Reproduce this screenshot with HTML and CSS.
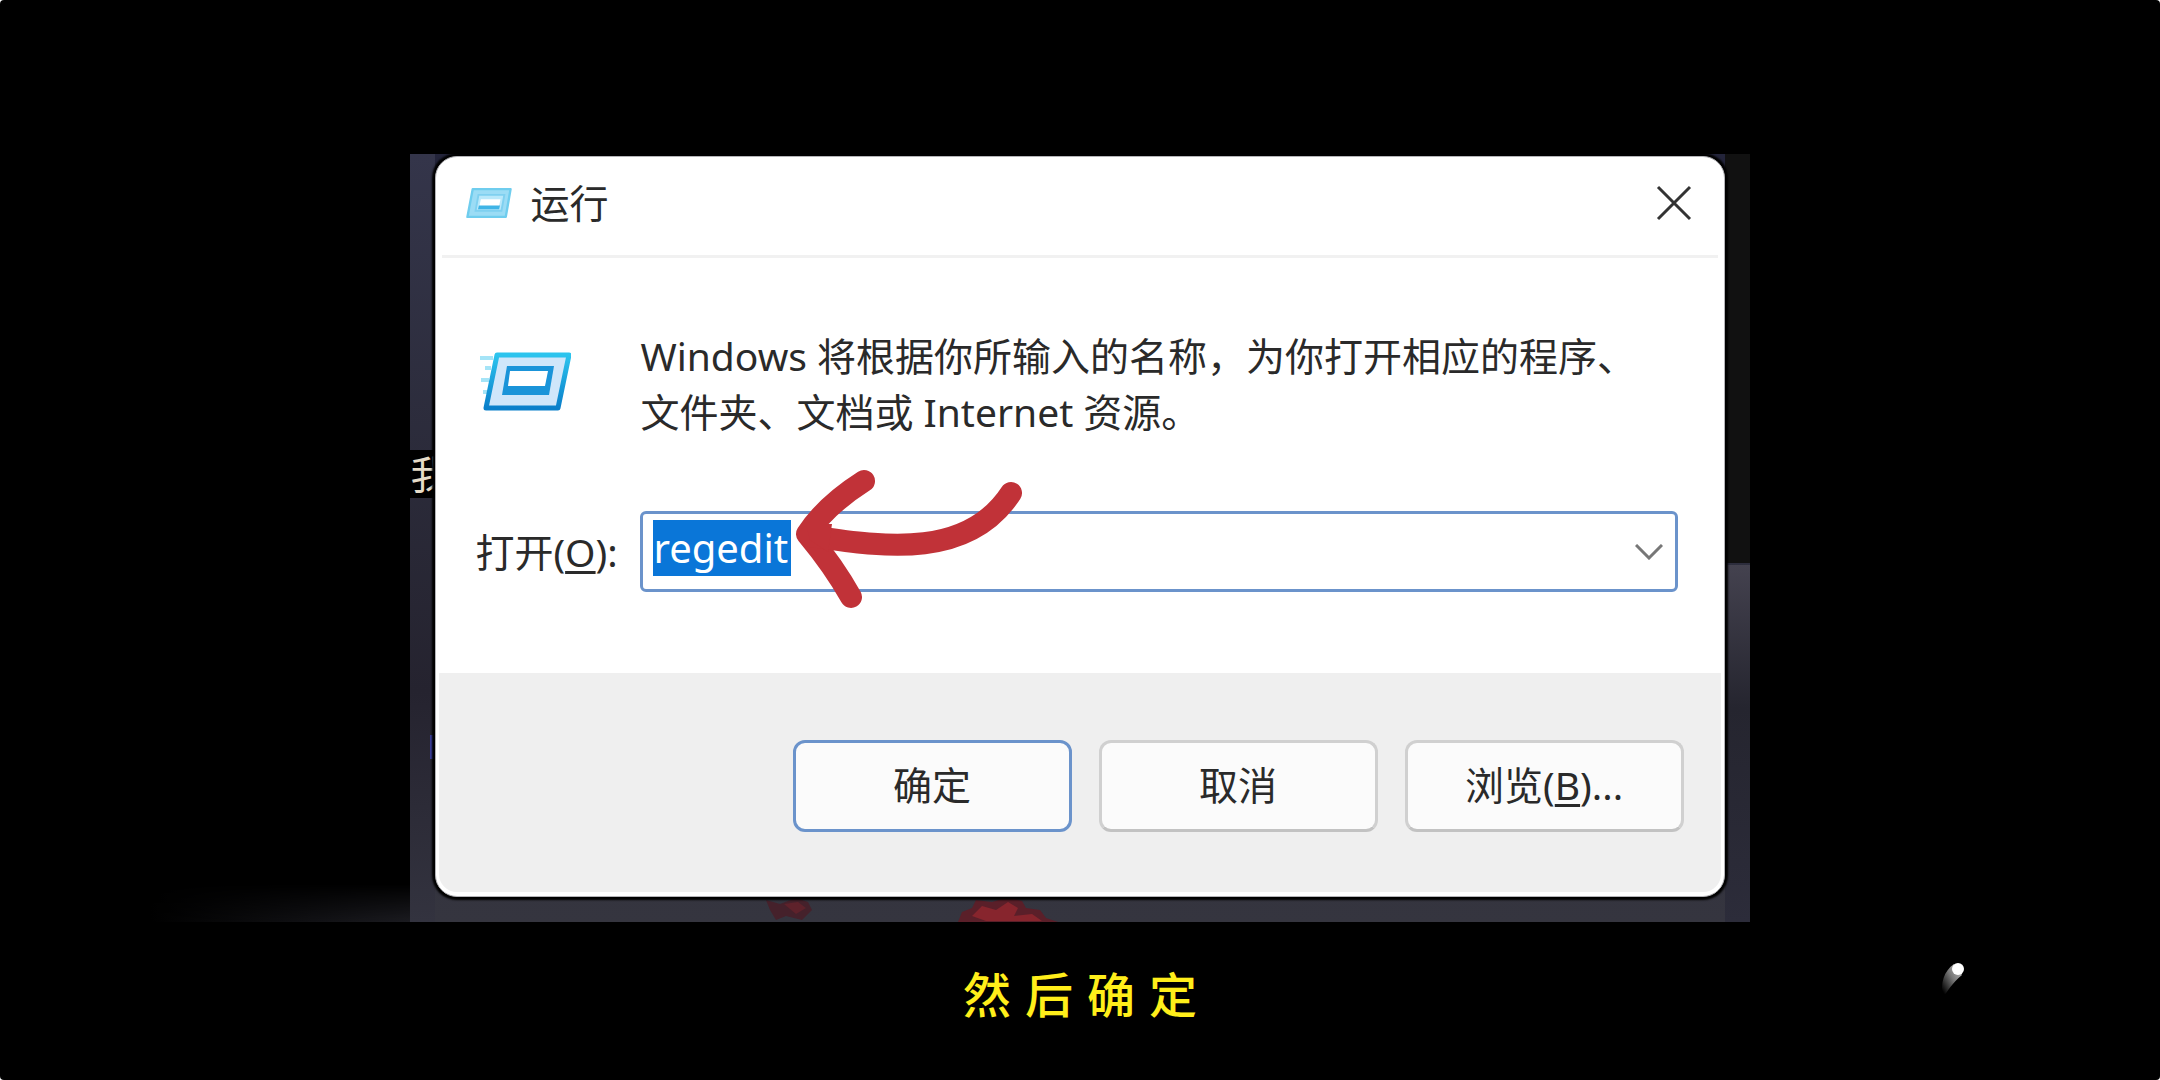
FILE: index.html
```html
<!DOCTYPE html>
<html lang="zh-CN">
<head>
<meta charset="utf-8">
<title>运行</title>
<link rel="stylesheet" href="styles.css">
</head>
<body>
<main class="stage">
  <div class="desktop">
    <span class="leaf-top"></span>
    <svg class="leaves" viewBox="0 0 330 26" aria-hidden="true">
      <path d="M20 4L34 8L50 2L62 6L66 14L56 24L40 20L30 24L24 14Z" fill="#45212b"/>
      <path d="M38 8L52 6L60 12L50 18Z" fill="#5e222b"/>
      <path d="M212 26L216 16L226 12L230 4L246 6L262 1L276 5L280 12L294 14L300 22L312 26Z" fill="#5a1f29"/>
      <path d="M226 20L236 10L250 14L262 6L272 12L268 20L286 18L296 25L240 25Z" fill="#87252d"/>
    </svg>
    <span class="desktop-label" aria-hidden="true">我</span>
    <span class="desktop-mark"></span>
    <section class="dialog" role="dialog" aria-labelledby="dialog-title">
      <header class="titlebar">
        <svg class="icon-small" viewBox="0 0 96 64" aria-hidden="true">
          <path d="M14 3H93L83 61H3Z" fill="#9bdcf5" stroke="#6fcdee" stroke-width="5" stroke-linejoin="round"/>
          <path d="M26 15H80L74 48H20Z" fill="#b9e8fa" stroke="#7fd0f0" stroke-width="4"/>
          <path d="M31 24H72L69 38H28Z" fill="#fff"/>
          <path d="M27 37H71L69 45H25Z" fill="#3fb4e6"/>
        </svg>
        <h1 class="title" id="dialog-title">运行</h1>
        <button class="close" type="button" aria-label="关闭">
          <svg viewBox="0 0 36 36" aria-hidden="true"><path d="M2 2L34 34M34 2L2 34" fill="none" stroke="#333" stroke-width="3"/></svg>
        </button>
      </header>
      <div class="content">
        <svg class="icon-run" viewBox="0 0 96 64" aria-hidden="true">
          <defs>
            <linearGradient id="frame" x1="0" y1="0" x2="0" y2="1">
              <stop offset="0" stop-color="#2cc4ee"/>
              <stop offset="1" stop-color="#0a7fca"/>
            </linearGradient>
          </defs>
          <path d="M5 6H18M10 16H16M6 28H14M8 40H12" stroke="#a5e4f7" stroke-width="4"/>
          <path d="M22 3H94L83 56H11Z" fill="#cfe6fa" stroke="url(#frame)" stroke-width="5" stroke-linejoin="round"/>
          <path d="M32 14H79L74 43H27Z" fill="#1a94d9"/>
          <path d="M35 19H73L70 34H33Z" fill="#fff"/>
        </svg>
        <p class="description">Windows 将根据你所输入的名称，为你打开相应的程序、<br>文件夹、文档或 Internet 资源。</p>
        <label class="label" for="command">打开(<u>O</u>):</label>
        <div class="combo">
          <input class="command" id="command" type="text" value="regedit" spellcheck="false">
          <button class="expand" type="button" aria-label="展开列表">
            <svg viewBox="0 0 28 16" aria-hidden="true"><path d="M1 1L14 14L27 1" fill="none" stroke="#777" stroke-width="3"/></svg>
          </button>
          <svg class="pointer" viewBox="0 0 260 180" aria-hidden="true">
            <g fill="none" stroke="#c13238" stroke-width="22" stroke-linecap="round" stroke-linejoin="round">
              <path d="M84 41C62 55 40 74 27 94C42 112 57 132 71 157"/>
              <path d="M30 96C90 104 185 124 231 53"/>
            </g>
            <path d="M26 84L52 84L48 112L30 100Z" fill="#c13238"/>
          </svg>
        </div>
      </div>
      <footer class="actions">
        <button class="button button-default" type="button">确定</button>
        <button class="button" type="button">取消</button>
        <button class="button" type="button">浏览(<u>B</u>)...</button>
      </footer>
    </section>
  </div>
  <p class="caption">然后确定</p>
  <svg class="spark" viewBox="0 0 30 50" aria-hidden="true">
    <defs>
      <linearGradient id="trail" x1="1" y1="0" x2="0" y2="1">
        <stop offset="0" stop-color="#ccc"/>
        <stop offset="0.45" stop-color="#777"/>
        <stop offset="0.9" stop-color="#000"/>
      </linearGradient>
    </defs>
    <path d="M14 5C4 12 0 24 3 38C8 32 12 24 22 16Z" fill="url(#trail)"/>
    <circle cx="18" cy="10" r="6" fill="#fff"/>
  </svg>
</main>
</body>
</html>
```
FILE: styles.css
```css
* {
  box-sizing: border-box;
}

html {
  background: #fff;
}

body {
  margin: 0;
  font-family: "Noto Sans", "Noto Sans CJK SC", sans-serif;
  font-size: 39px;
  line-height: 56px;
  color: #2a2a2a;
}

button,
input {
  font: inherit;
  color: inherit;
}

.stage {
  position: relative;
  display: flex;
  flex-direction: column;
  align-items: center;
  min-height: 100vh;
  padding-top: 154px;
  background: #000;
  border-radius: 4px;
}

/* Strip of desktop that shows round the dialog */
.desktop {
  position: relative;
  width: 62%;
  padding: 2px 25px 25px;
  background:
    linear-gradient(#111, #111) right top / 25px 409px no-repeat,
    linear-gradient(#44424f, #25252f 40%, #2c2c3a) right bottom / 25px 357px no-repeat,
    linear-gradient(#000, #000) left 296px / 25px 48px no-repeat,
    linear-gradient(#34354a, #2b2b3a 40%, #25232f 70%, #33333f) left top / 25px 100% no-repeat,
    linear-gradient(#23243a, #35353f);
}

.desktop::before {
  content: "";
  position: absolute;
  right: 100%;
  bottom: 0;
  width: 260px;
  height: 38px;
  background: linear-gradient(to left, #1b1b20, #000);
  mask-image: linear-gradient(transparent, #000);
}

.leaf-top {
  position: absolute;
  top: 0;
  left: 86px;
  width: 40px;
  height: 3px;
  background: #8d0f16;
}

.leaves {
  position: absolute;
  bottom: 0;
  left: 336px;
  width: 330px;
  height: 26px;
}

.desktop-label {
  position: absolute;
  top: 292px;
  left: 0;
  color: #e6dcc8;
}

.desktop-mark {
  position: absolute;
  top: 581px;
  left: 20px;
  width: 8px;
  height: 24px;
  background: #3b3f9c;
}

.dialog {
  position: relative;
  padding: 0 3px 4px;
  background: #fff;
  border: 1px solid #b4b4b8;
  border-radius: 22px;
  box-shadow: 0 0 2px 3px #000;
}

.titlebar {
  display: flex;
  align-items: center;
  gap: 18px;
  height: 101px;
  margin: 0 3px;
  padding: 0 26px 6px 24px;
  border-bottom: 3px solid #f1f1f1;
}

.icon-small {
  width: 46px;
  height: 32px;
}

.title {
  flex: 1;
  margin: 0;
  font-size: inherit;
  font-weight: 400;
}

.close,
.expand {
  display: flex;
  padding: 0;
  background: none;
  border: 0;
}

.close svg {
  width: 36px;
  height: 36px;
}

.content {
  display: grid;
  grid-template-columns: 165px 1fr;
  row-gap: 71px;
  align-items: center;
  padding: 70px 43px 81px 36px;
}

.icon-run {
  width: 96px;
  height: 64px;
}

.description {
  margin: 0;
}

u {
  text-decoration-thickness: 3px;
  text-underline-offset: 4px;
}

.combo {
  position: relative;
  display: flex;
  align-items: center;
  justify-content: space-between;
  height: 81px;
  padding: 0 12px 8px 10px;
  border: 3px solid #6b93cb;
  border-radius: 6px;
}

.command {
  width: 138px;
  height: 56px;
  padding: 0;
  border: 0;
  outline: 0;
  background: #0a76d8;
  color: #fff;
  font-size: 40px;
}

.expand svg {
  width: 28px;
  height: 16px;
  margin-top: 8px;
}

.pointer {
  position: absolute;
  top: -74px;
  left: 137px;
  width: 260px;
  height: 180px;
  pointer-events: none;
}

.actions {
  display: flex;
  justify-content: flex-end;
  gap: 27px;
  padding: 67px 37px 60px;
  background: #efefef;
  border-radius: 0 0 18px 18px;
}

.button {
  width: 279px;
  height: 92px;
  padding: 0 0 2px;
  background: #fbfbfb;
  border: 3px solid #d0d0d0;
  border-bottom-color: #c2c2c2;
  border-radius: 12px;
}

.button-default {
  border-color: #6b93cb;
}

.caption {
  margin: 38px 0 0;
  padding-left: 14px;
  font-size: 48px;
  line-height: 70px;
  font-weight: 500;
  letter-spacing: 14px;
  color: #ffee1a;
}

.spark {
  position: absolute;
  right: 190px;
  bottom: 71px;
  width: 30px;
  height: 50px;
}
```
